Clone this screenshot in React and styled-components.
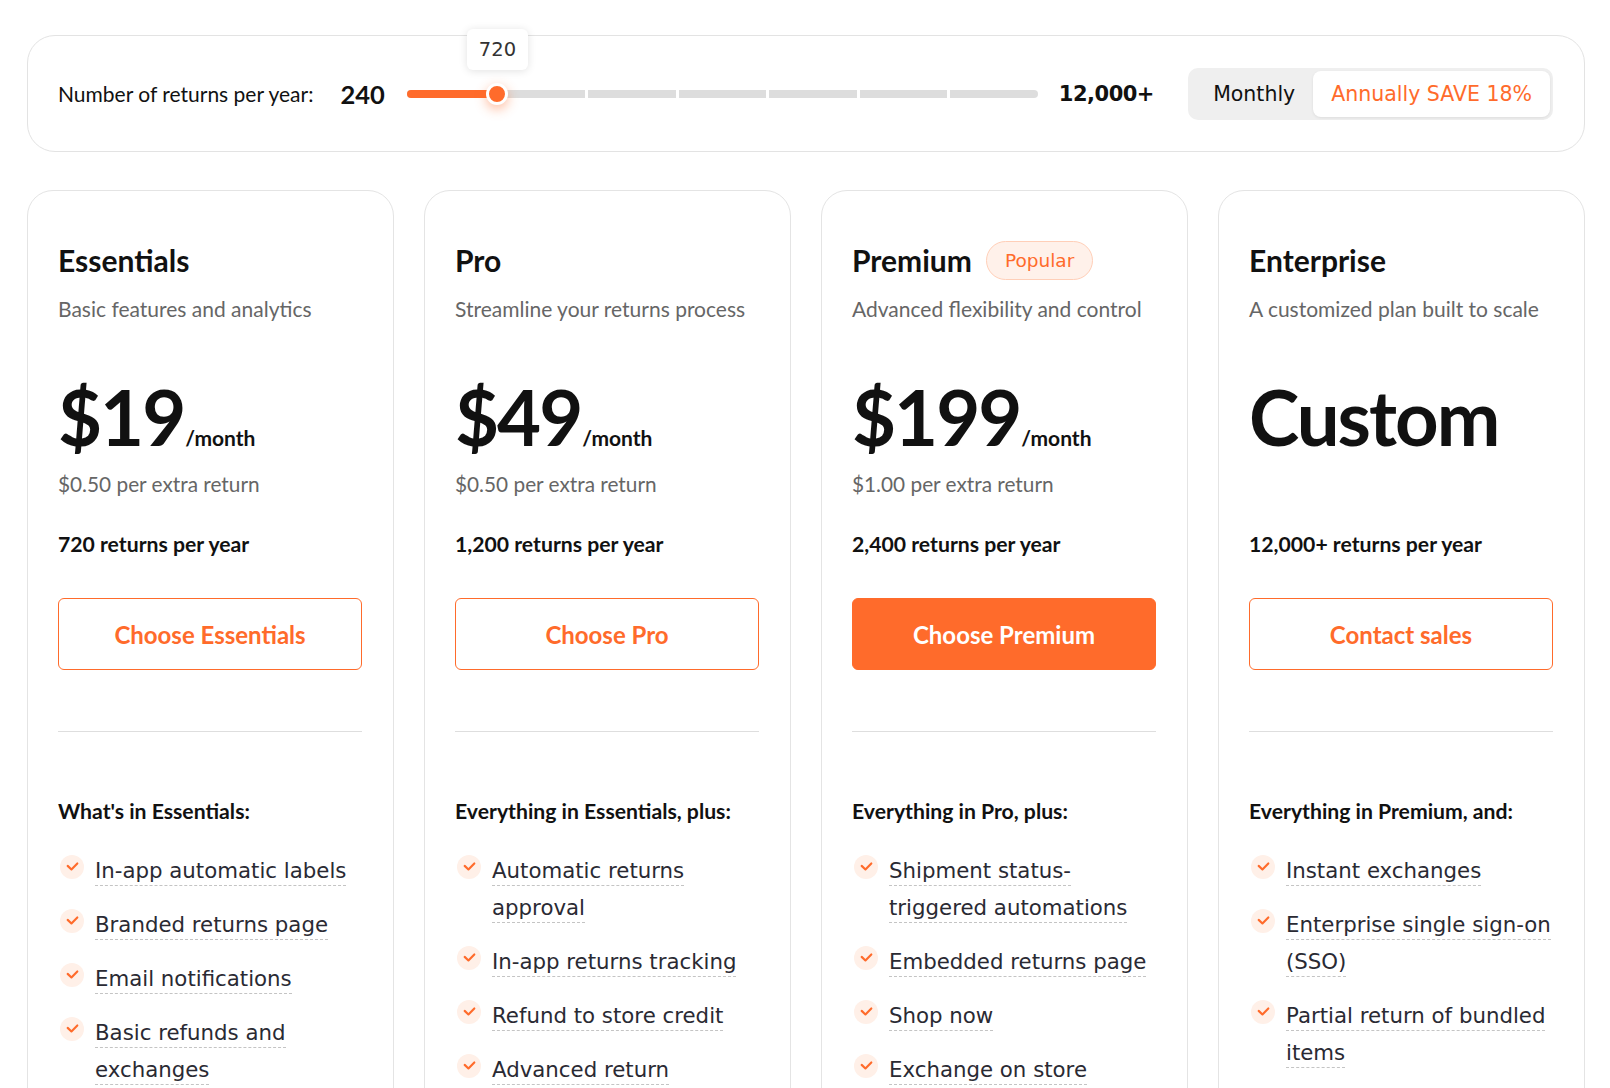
import React from 'react';
import styled, { createGlobalStyle } from 'styled-components';

const ORANGE = '#ff6b2b';
const UI = "'Lato', 'Open Sans', sans-serif";
const GEO = "'DejaVu Sans', 'Open Sans', sans-serif";

const GlobalStyle = createGlobalStyle`
  body {
    margin: 0;
    background: #fff;
    font-family: ${UI};
    color: #111;
  }
  * { box-sizing: border-box; }
`;

const plans = [
  {
    name: 'Essentials',
    desc: 'Basic features and analytics',
    price: '$19',
    extra: '$0.50 per extra return',
    returns: '720 returns per year',
    cta: 'Choose Essentials',
    heading: "What's in Essentials:",
    features: ['In-app automatic labels', 'Branded returns page', 'Email notifications', 'Basic refunds and exchanges', 'Return reasons'],
  },
  {
    name: 'Pro',
    desc: 'Streamline your returns process',
    price: '$49',
    extra: '$0.50 per extra return',
    returns: '1,200 returns per year',
    cta: 'Choose Pro',
    heading: 'Everything in Essentials, plus:',
    features: ['Automatic returns approval', 'In-app returns tracking', 'Refund to store credit', 'Advanced return management'],
  },
  {
    name: 'Premium',
    popular: true,
    desc: 'Advanced flexibility and control',
    price: '$199',
    extra: '$1.00 per extra return',
    returns: '2,400 returns per year',
    cta: 'Choose Premium',
    primary: true,
    heading: 'Everything in Pro, plus:',
    features: ['Shipment status-triggered automations', 'Embedded returns page', 'Shop now', 'Exchange on store website'],
  },
  {
    name: 'Enterprise',
    desc: 'A customized plan built to scale',
    custom: 'Custom',
    returns: '12,000+ returns per year',
    cta: 'Contact sales',
    heading: 'Everything in Premium, and:',
    features: ['Instant exchanges', 'Enterprise single sign-on (SSO)', 'Partial return of bundled items'],
  },
];

const Page = styled.div`
  padding: 35px 25px 0 27px;
  display: flex;
  flex-direction: column;
  gap: 38px;
`;

const Panel = styled.div`
  height: 117px;
  border: 1.5px solid #e3e3e3;
  border-radius: 28px;
  display: flex;
  align-items: center;
  padding: 0 31px 0 30px;
`;

const Label = styled.span`
  font-size: 21px;
  color: #111;
`;

const Value = styled.span`
  margin-left: 27px;
  font-size: 25.5px;
  font-weight: 700;
`;

const Slider = styled.div`
  position: relative;
  flex: none;
  width: 631px;
  margin-left: 22px;
  height: 24px;
  display: flex;
  align-items: center;
`;

const Track = styled.div`
  width: 100%;
  display: flex;
  gap: 3px;
`;

const Segment = styled.div`
  flex: 1;
  height: 8px;
  background: #dddddd;
  &:first-child { border-radius: 4px 0 0 4px; }
  &:last-child { border-radius: 0 4px 4px 0; }
`;

const Fill = styled.div`
  position: absolute;
  left: 0;
  top: 8px;
  height: 8px;
  border-radius: 4px 0 0 4px;
  background: ${ORANGE};
`;

const Thumb = styled.div`
  position: absolute;
  top: 1px;
  width: 22px;
  height: 22px;
  margin-left: -11px;
  border-radius: 50%;
  background: ${ORANGE};
  border: 3px solid #fff;
  box-shadow: 0 4px 12px rgba(255, 107, 43, 0.45);
`;

const Tip = styled.div`
  position: absolute;
  bottom: 36px;
  width: 61px;
  height: 41px;
  margin-left: -30px;
  background: #fff;
  border-radius: 6px;
  box-shadow: 0 1px 8px rgba(0, 0, 0, 0.12);
  display: flex;
  align-items: center;
  justify-content: center;
  font-family: ${GEO};
  font-size: 19.5px;
  color: #333;
`;

const MaxValue = styled.span`
  margin-left: 21px;
  font-family: ${GEO};
  font-size: 21px;
  font-weight: 700;
  letter-spacing: -0.5px;
`;

const Toggle = styled.div`
  margin-left: auto;
  display: flex;
  align-items: center;
  height: 52px;
  padding: 3px;
  border-radius: 10px;
  background: #efefef;
`;

const ToggleOption = styled.button`
  height: 46px;
  border: none;
  border-radius: 8px;
  padding: 0 ${(p) => (p.$active ? '18px' : '18px 0 22px')};
  font-family: ${GEO};
  font-size: 20.5px;
  cursor: pointer;
  background: ${(p) => (p.$active ? '#fff' : 'transparent')};
  color: ${(p) => (p.$active ? ORANGE : '#111')};
  box-shadow: ${(p) => (p.$active ? '0 1px 3px rgba(0,0,0,0.08)' : 'none')};
`;

const Cards = styled.div`
  display: grid;
  grid-template-columns: repeat(4, 1fr);
  gap: 30px;
`;

const Card = styled.div`
  border: 1.5px solid #e4e4e4;
  border-radius: 26px;
  padding: 51px 28px 60px 30px;
  min-height: 1000px;
`;

const TitleRow = styled.div`
  display: flex;
  align-items: center;
  gap: 14px;
  height: 36px;
`;

const Title = styled.h2`
  margin: 0;
  font-size: 30px;
  font-weight: 700;
  line-height: 36px;
`;

const Badge = styled.span`
  height: 39px;
  padding: 0 18px;
  display: inline-flex;
  align-items: center;
  border-radius: 20px;
  border: 1.5px solid #ffcfb8;
  background: #fff1ea;
  color: ${ORANGE};
  font-family: ${GEO};
  font-size: 18.5px;
`;

const Desc = styled.p`
  margin: 17px 0 0;
  font-size: 21px;
  line-height: 28px;
  color: #666;
`;

const PriceRow = styled.div`
  margin-top: 54px;
  display: flex;
  align-items: baseline;
  height: 80px;
`;

const Price = styled.span`
  font-size: 76px;
  font-weight: 700;
  line-height: 80px;
  letter-spacing: -2px;
`;

const Per = styled.span`
  font-size: 21px;
  font-weight: 700;
  margin-left: 1px;
`;

const Extra = styled.p`
  margin: 13px 0 0;
  min-height: 28px;
  font-size: 20.8px;
  line-height: 28px;
  color: #666;
`;

const Returns = styled.p`
  margin: 32px 0 0;
  font-size: 21.2px;
  line-height: 28px;
  font-weight: 700;
`;

const CTA = styled.button`
  margin-top: 40px;
  width: calc(100% - 3px);
  height: 72px;
  border-radius: 6px;
  border: 1.5px solid ${ORANGE};
  background: ${(p) => (p.$primary ? ORANGE : '#fff')};
  color: ${(p) => (p.$primary ? '#fff' : ORANGE)};
  font-family: ${UI};
  font-size: 24px;
  font-weight: 700;
  cursor: pointer;
`;

const Divider = styled.hr`
  margin: 61px 3px 0 0;
  border: none;
  border-top: 1.5px solid #dedede;
`;

const Heading = styled.h3`
  margin: 65px 0 0;
  font-size: 21.2px;
  line-height: 28px;
  font-weight: 700;
`;

const List = styled.ul`
  list-style: none;
  margin: 27px 0 0;
  padding: 0;
  display: flex;
  flex-direction: column;
  gap: 17px;
`;

const Item = styled.li`
  display: flex;
  align-items: flex-start;
  gap: 11px;
  font-family: ${GEO};
  font-size: 21.3px;
  line-height: 37px;
  color: #2a2a33;
`;

const CheckDot = styled.span`
  flex: none;
  width: 24px;
  height: 24px;
  margin: 3px 0 0 2px;
  border-radius: 50%;
  background: #fff0e8;
  display: flex;
  align-items: center;
  justify-content: center;
`;

const ItemText = styled.span`
  span {
    border-bottom: 1.5px dashed #c4c4c4;
    padding-bottom: 2px;
  }
`;

const Check = () => (
  <CheckDot>
    <svg width="15" height="15" viewBox="0 0 14 14" fill="none">
      <path d="M2.5 5.5 L6 8.8 L11.5 3.2" stroke={ORANGE} strokeWidth="2" strokeLinecap="round" strokeLinejoin="round" />
    </svg>
  </CheckDot>
);

export default function App() {
  const steps = 7;
  const pos = (1 / steps) * 100;
  return (
    <>
      <GlobalStyle />
      <Page>
        <Panel>
          <Label>Number of returns per year:</Label>
          <Value>240</Value>
          <Slider>
            <Track>
              {Array.from({ length: steps }).map((_, i) => (
                <Segment key={i} />
              ))}
            </Track>
            <Fill style={{ width: `${pos}%` }} />
            <Thumb style={{ left: `${pos}%` }} />
            <Tip style={{ left: `${pos}%` }}>720</Tip>
          </Slider>
          <MaxValue>12,000+</MaxValue>
          <Toggle>
            <ToggleOption>Monthly</ToggleOption>
            <ToggleOption $active>Annually SAVE 18%</ToggleOption>
          </Toggle>
        </Panel>

        <Cards>
          {plans.map((p) => (
            <Card key={p.name}>
              <TitleRow>
                <Title>{p.name}</Title>
                {p.popular && <Badge>Popular</Badge>}
              </TitleRow>
              <Desc>{p.desc}</Desc>
              <PriceRow>
                {p.custom ? (
                  <Price>{p.custom}</Price>
                ) : (
                  <>
                    <Price>{p.price}</Price>
                    <Per>/month</Per>
                  </>
                )}
              </PriceRow>
              <Extra>{p.extra}</Extra>
              <Returns>{p.returns}</Returns>
              <CTA $primary={p.primary}>{p.cta}</CTA>
              <Divider />
              <Heading>{p.heading}</Heading>
              <List>
                {p.features.map((f) => (
                  <Item key={f}>
                    <Check />
                    <ItemText>
                      <span>{f}</span>
                    </ItemText>
                  </Item>
                ))}
              </List>
            </Card>
          ))}
        </Cards>
      </Page>
    </>
  );
}
